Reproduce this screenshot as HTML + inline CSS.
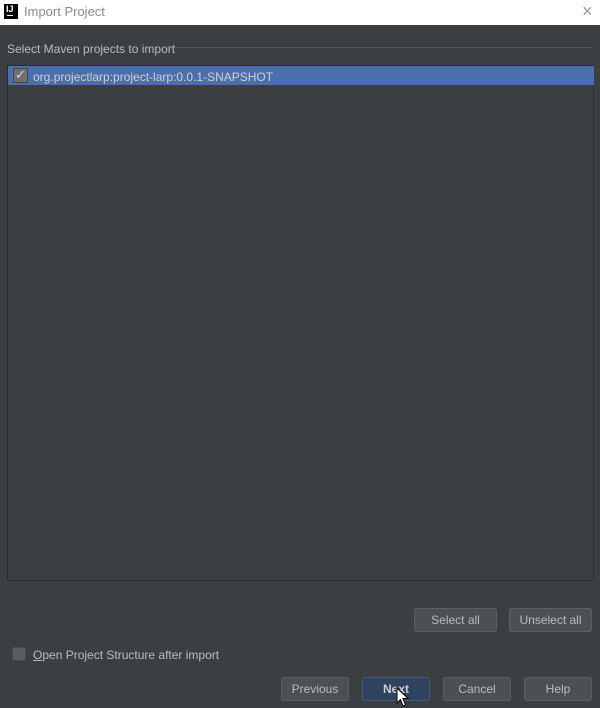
<!DOCTYPE html>
<html><head><style>
body{margin:0;width:600px;height:708px;background:#3c3f41;font-family:"Liberation Sans",sans-serif;font-size:12px;color:#bbbbbb;position:relative;overflow:hidden}
.t{position:absolute;left:0;top:0;width:600px;height:25px;background:#fff}
.a{position:absolute}
.btn{position:absolute;height:24px;border:1px solid #5e6060;border-radius:3px;background:#4c5052;color:#bbb;text-align:center;line-height:23px;box-sizing:border-box}
</style></head><body>
<div class="t">
<div class="a" style="left:4px;top:4px;width:14px;height:15px;background:#000;color:#fff;font-size:9px;font-weight:bold;line-height:10px;padding-left:2px;box-sizing:border-box">IJ<div style="position:absolute;left:3px;top:11px;width:6px;height:1px;background:#fff"></div></div>
<div class="a" style="left:24px;top:4px;color:#8a8a8a;font-size:13px">Import Project</div>
<div class="a" style="left:582px;top:1px;color:#999;font-size:18px">×</div>
</div>
<div class="a" style="left:7px;top:42px">Select Maven projects to import</div>
<div class="a" style="left:175px;top:47px;width:418px;height:1px;background:#555"></div>
<div class="a" style="left:7px;top:65px;width:585px;height:514px;border:1px solid #2b2b2b;background:#3c3f41"></div>
<div class="a" style="left:8px;top:66px;width:586px;height:19px;background:#4b6eaf"></div>
<div class="a" style="left:13px;top:68px;width:13px;height:13px;background:#6d6f70;border:1px solid #444;color:#ddd;font-size:13px;line-height:12px;text-align:center">✓</div>
<div class="a" style="left:33px;top:70px;color:#d0d0d0">org.projectlarp:project-larp:0.0.1-SNAPSHOT</div>
<div class="btn" style="left:414px;top:608px;width:83px">Select all</div>
<div class="btn" style="left:509px;top:608px;width:83px">Unselect all</div>
<div class="a" style="left:12px;top:647px;width:14px;height:14px;background:#5a5d5f;border:1px solid #4a4a4a;box-sizing:border-box"></div>
<div class="a" style="left:33px;top:648px"><u>O</u>pen Project Structure after import</div>
<div class="btn" style="left:281px;top:677px;width:68px">Previous</div>
<div class="btn" style="left:362px;top:677px;width:68px;background:#2f4360;border-color:#445a75;color:#ccc;font-weight:bold">Next</div>
<div class="btn" style="left:443px;top:677px;width:68px">Cancel</div>
<div class="btn" style="left:524px;top:677px;width:68px">Help</div>
<svg class="a" style="left:396px;top:687px" width="14" height="21"><path d="M1 1 L1 16 L4.5 12.5 L7 19 L9.5 18 L7 11.5 L12 11.5 Z" fill="#fff" stroke="#000"/></svg>
</body></html>
